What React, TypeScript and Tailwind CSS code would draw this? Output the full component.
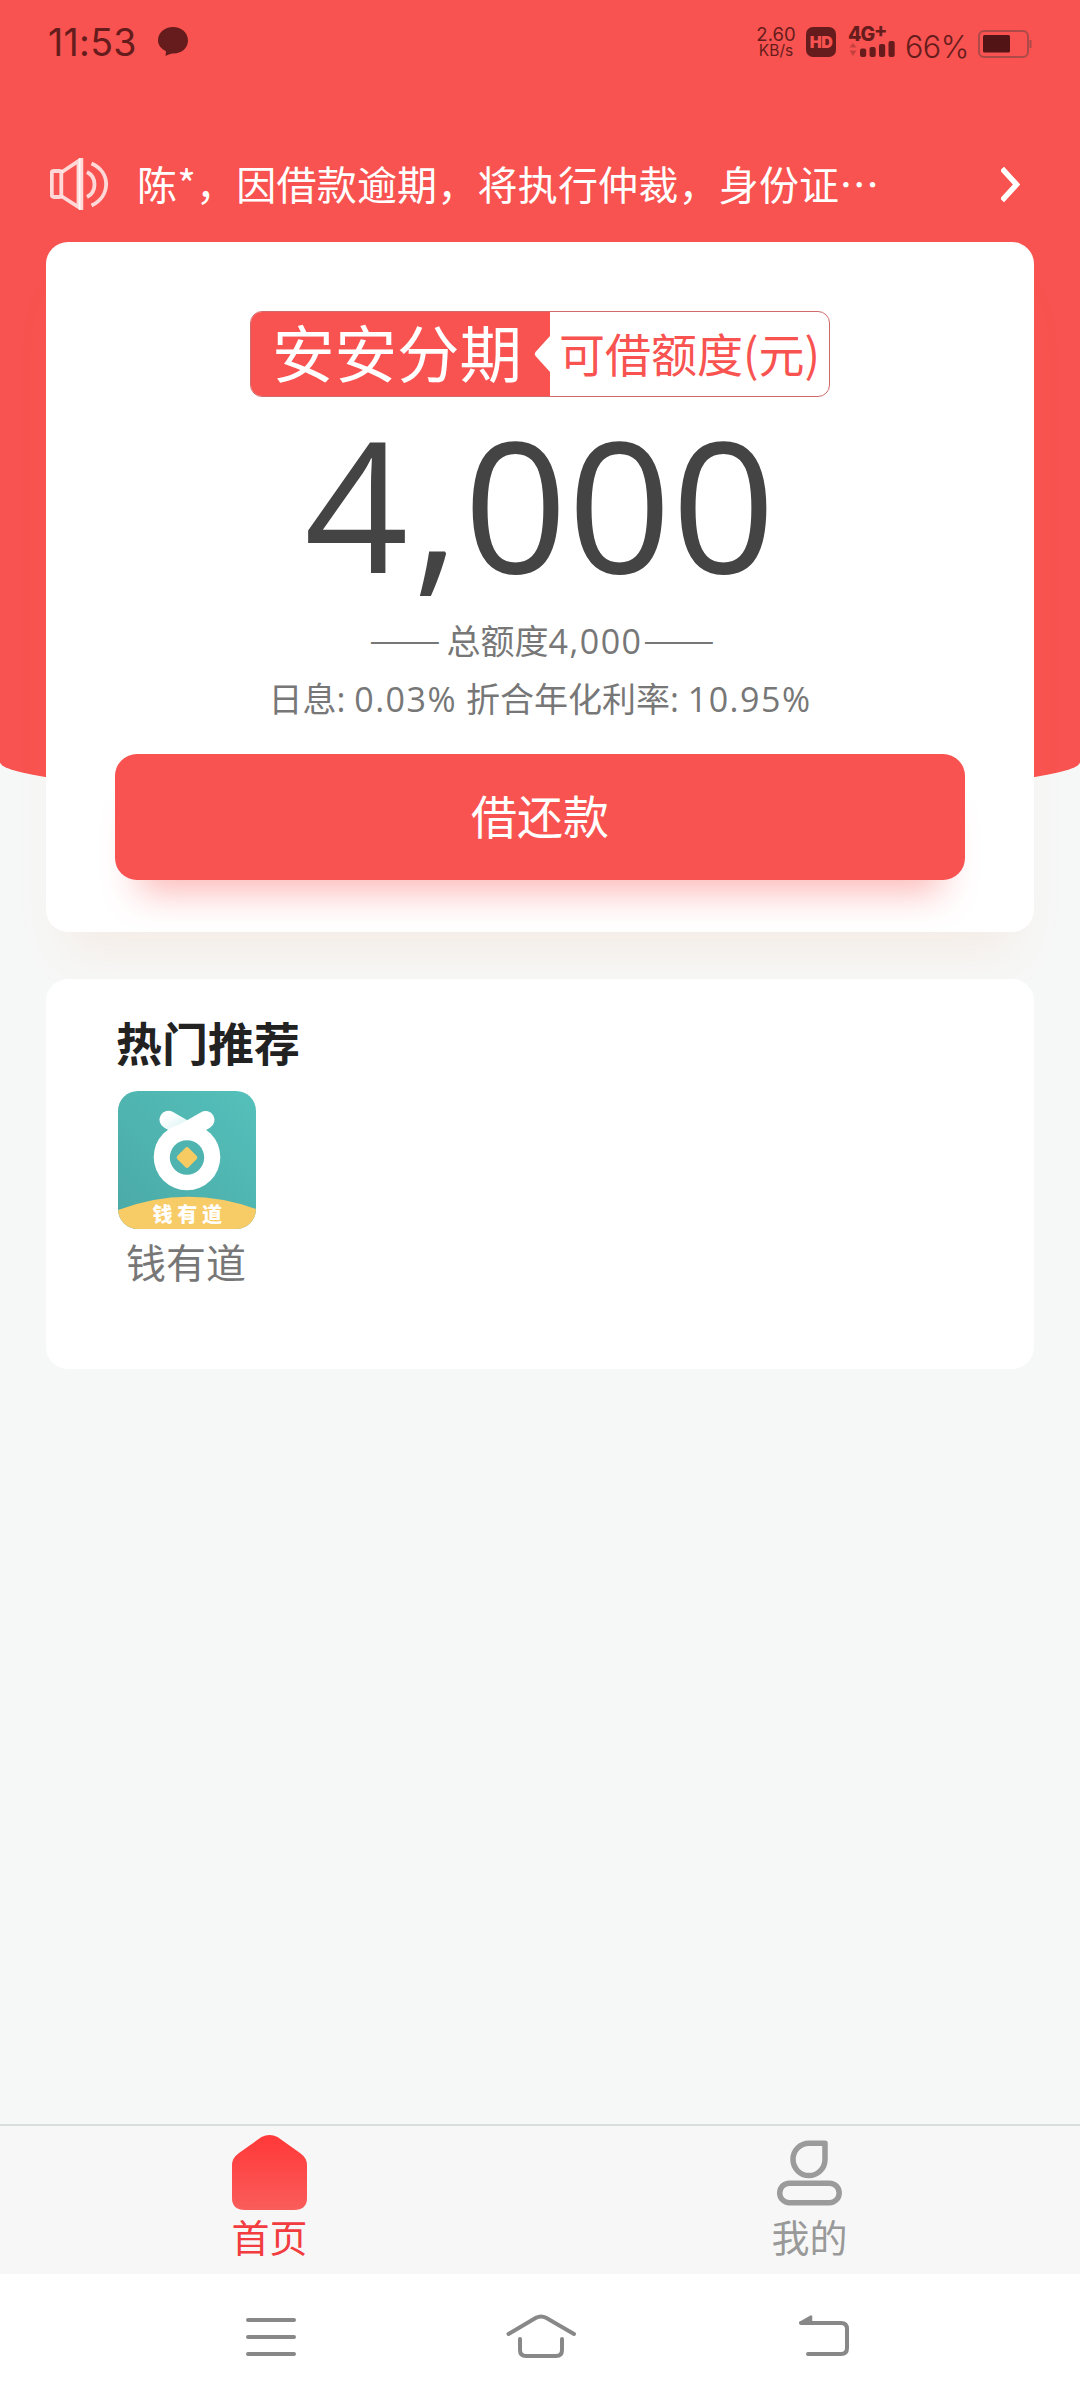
import React from 'react';

const StatusBar: React.FC = () => (
  <div className="flex h-[84px] items-start pl-[48px] pt-[27px] font-[Inter,sans-serif] text-[#661c1c]">
    <span className="mt-[2px] w-[110px] whitespace-nowrap text-[37.500px] leading-[28px] tracking-[0.300px]">11:53</span>
    <svg width="30" height="30" viewBox="0 0 30 30" fill="currentColor">
      <path d="M15 0C23.400 0 30 5.600 30 13.500S23.400 26.500 15.500 26.500C13.500 26.500 12 27 7.500 29L8 24.200C3.200 22 0 18 0 13.500 0 5.600 6.700 0 15 0Z" />
    </svg>
    <div className="ml-[568px] flex w-[40px] flex-col items-center">
      <span className="text-[18.500px] leading-[15px]">2.60</span>
      <span className="mt-[2px] text-[15.500px] leading-[14px]">KB/s</span>
    </div>
    <div className="ml-[10px] flex h-[30px] w-[30px] items-center justify-center rounded-[7px] bg-[#661c1c] text-[16px] font-black leading-none tracking-[-0.5px] text-[#f85350]">
      HD
    </div>
    <div className="ml-[12px] flex w-[48px] flex-col">
      <div className="flex text-[19.500px] font-extrabold leading-[14px] tracking-[-1px]">
        <span>4G</span>
        <span className="mt-[-4px]">+</span>
      </div>
      <svg width="47" height="17" viewBox="0 0 47 17" className="mt-[-1px]" fill="currentColor">
        <path d="M5 3 8.500 7.500H1.500ZM5 16 8.500 10.500H1.500Z" opacity=".35" />
        <rect x="12" y="8.500" width="6.200" height="8.500" rx="2" />
        <rect x="21.500" y="7" width="6.200" height="10" rx="2" />
        <rect x="31" y="4" width="6.200" height="13" rx="2" />
        <rect x="40.500" y="1" width="6.200" height="16" rx="2" />
      </svg>
    </div>
    <span className="ml-[9px] mt-[8px] w-[65px] whitespace-nowrap text-[30.500px] font-light leading-[24px] tracking-[-0.500px]">66%</span>
    <svg width="56" height="30" viewBox="0 0 56 30" className="ml-[8px] mt-[3px]" fill="none">
      <rect x="1" y="1" width="49" height="26" rx="5" stroke="#ad4a49" strokeWidth="2" />
      <rect x="5" y="5" width="27" height="17.500" rx="1.500" fill="#521415" />
      <rect x="51.500" y="10" width="2" height="8" fill="#ad4a49" />
    </svg>
  </div>
);

const Notice: React.FC = () => (
  <div className="flex h-[158px] items-center pl-[50px] pr-[59px] pt-[42px]">
    <svg width="58" height="52" viewBox="0 0 58 52" fill="none" stroke="#fff" strokeOpacity=".78" strokeWidth="3.800">
      <rect x="1.800" y="13" width="9.500" height="26" rx="2" />
      <path d="M12 14 28.500 3V49L12 38.500" />
      <path d="M31 0V52" strokeWidth="4.500" />
      <path d="M37 14C47 19 47 34 37 39" />
      <path d="M41.500 5.500C61 14 61 38 41.500 47.500" />
    </svg>
    <p className="ml-[29px] mt-[-2px] flex-1 whitespace-nowrap text-[40px] leading-[56px] tracking-[0.200px] text-white">
      陈*，因借款逾期，将执行仲裁，身份证…
    </p>
    <svg width="20" height="40" viewBox="0 0 20 40" fill="none" stroke="#fff" strokeWidth="5.500">
      <path d="M1 4.500 15.500 20.500 1 36.500" />
    </svg>
  </div>
);

const LoanCard: React.FC = () => (
  <section className="mx-[46px] flex h-[690px] flex-col items-center rounded-[22px] bg-white pt-[69px] shadow-[0_40px_50px_-20px_rgba(248,130,80,0.1)]">
    <div className="flex h-[86px] w-[580px] rounded-[12px] border border-[#d0696a]">
      <div className="flex w-[299px] items-center justify-between rounded-l-[11px] bg-[#f85350] pl-[21px]">
        <span className="mt-[-6px] whitespace-nowrap text-[62.500px] leading-[92px] text-white">安安分期</span>
        <svg width="16" height="36" viewBox="0 0 16 36" fill="#fff">
          <path d="M16 0 1.500 16Q0 18 1.500 20L16 36Z" />
        </svg>
      </div>
      <div className="mt-[-4px] flex flex-1 items-center justify-center whitespace-nowrap text-[46px] leading-[84px] text-[#f85350]">
        可借额度(元)
      </div>
    </div>
    <div className="mt-[25px] whitespace-nowrap font-['Open_Sans',sans-serif] text-[182px] leading-[160px] text-[#444]">
      4<span className="mx-[4px]">,</span>000
    </div>
    <div className="mt-[34px] flex h-[50px] items-center whitespace-nowrap text-[34px] text-[#777]">
      <span className="mr-[14px] mt-[-5px] w-[54px] origin-left scale-x-[1.260]">——</span>
      <span className="ml-[9px] mt-px font-['Open_Sans','Noto_Sans_CJK_SC',sans-serif]">
        总额度<span className="tracking-[1.500px]">4,000</span>
      </span>
      <span className="mr-[14px] mt-[-5px] w-[54px] origin-left scale-x-[1.260]">——</span>
    </div>
    <div className="mt-[8px] h-[50px] whitespace-nowrap font-['Open_Sans','Noto_Sans_CJK_SC',sans-serif] text-[34px] leading-[50px] text-[#777]">
      日息: <span className="tracking-[1.500px]">0.03%</span> 折合年化利率: <span className="tracking-[1.500px]">10.95%</span>
    </div>
    <button className="mt-[30px] h-[126px] w-[850px] rounded-[22px] bg-[#f85350] pb-[6px] text-[46px] text-white shadow-[0_36px_36px_-24px_rgba(249,84,80,0.42)]">
      借还款
    </button>
  </section>
);

const AppLogo: React.FC = () => (
  <svg width="138" height="138" viewBox="0 0 138 138">
    <defs>
      <linearGradient id="teal" x1="0" y1="1" x2="1" y2="0">
        <stop offset="0" stopColor="#4aa9a6" />
        <stop offset="1" stopColor="#55c0bb" />
      </linearGradient>
      <linearGradient id="ear" x1="0" y1="0" x2="1" y2="1">
        <stop offset="0.200" stopColor="#fff" />
        <stop offset="1" stopColor="#c4eeec" />
      </linearGradient>
      <clipPath id="tile">
        <rect width="138" height="138" rx="20" />
      </clipPath>
    </defs>
    <g clipPath="url(#tile)">
      <rect width="138" height="138" fill="url(#teal)" />
      <path d="M55 20.900 76 33 62 46 46 36.500A9 9 0 0 1 55 20.900Z" fill="url(#ear)" />
      <path d="M87.500 29 56 47" stroke="#fff" strokeWidth="18" strokeLinecap="round" />
      <circle cx="69" cy="66" r="33.300" fill="#fff" />
      <circle cx="69" cy="66.500" r="17.200" fill="#4fb4b0" />
      <rect x="61" y="58.500" width="16" height="16" rx="2.500" fill="#f7cb62" transform="rotate(45 69 66.500)" />
      <path d="M0 119Q69 93 138 118V138H0Z" fill="#f7cb66" />
      <text x="34.500" y="130.500" fontSize="20" fontWeight="900" letterSpacing="4.800" fill="#fff">钱有道</text>
    </g>
  </svg>
);

const HotList: React.FC = () => (
  <section className="mx-[46px] mt-[180px] h-[390px] rounded-[22px] bg-white pl-[70px] pt-[29px]">
    <h2 className="text-[46px] font-bold leading-[66px] text-[#222]">热门推荐</h2>
    <div className="ml-[2px] mt-[17px] flex w-[138px] flex-col items-center">
      <AppLogo />
      <span className="ml-[-2px] mt-[4px] text-[40px] leading-[56px] text-[#777]">钱有道</span>
    </div>
  </section>
);

const TabBar: React.FC = () => (
  <nav className="grid h-[150px] grid-cols-2 border-t-2 border-[#d9dddb] bg-[#f7f7f7] text-[38px] leading-[50px]">
    <div className="flex flex-col items-center pr-px pt-[9px] text-[#f23c40]">
      <svg width="75" height="75" viewBox="0 0 75 75">
        <defs>
          <linearGradient id="home" x1="0" y1="0" x2="0" y2="1">
            <stop offset="0.100" stopColor="#ff3b3b" />
            <stop offset="1" stopColor="#f95d5b" />
          </linearGradient>
        </defs>
        <path
          d="M29.500 2Q37.500-2 45.500 2L68 18Q75 23 75 30V63Q75 75 62 75H13Q0 75 0 63V30Q0 23 7 18Z"
          fill="url(#home)"
        />
      </svg>
      <span className="mt-px">首页</span>
    </div>
    <div className="flex flex-col items-center pr-px pt-[9px] text-[#999]">
      <svg width="75" height="75" viewBox="0 0 75 75" fill="none" stroke="#9b9b9b" strokeWidth="5.500">
        <path d="M37 8.200H53V24.500A16 16.200 0 1 1 37 8.200Z" strokeLinejoin="round" />
        <rect x="7.700" y="48.200" width="59.500" height="19.500" rx="9.750" />
      </svg>
      <span className="mt-px">我的</span>
    </div>
  </nav>
);

const SystemNav: React.FC = () => (
  <div className="flex h-[126px] items-start bg-white pl-[246px] pt-[38px]">
    <svg width="50" height="50" viewBox="0 0 50 50" stroke="#888" strokeWidth="4" strokeLinecap="round">
      <path d="M2 8H48M2 25H48M2 42H48" />
    </svg>
    <svg
      width="72"
      height="50"
      viewBox="0 0 72 50"
      className="ml-[209px]"
      fill="none"
      stroke="#888"
      strokeWidth="4"
      strokeLinecap="round"
    >
      <path d="M3.500 22 31 5.800Q36 3 41 5.800L69 22M15 27V38Q15 44 21 44H51Q57 44 57 38V27" />
    </svg>
    <svg width="54" height="50" viewBox="0 0 54 50" className="ml-[220px]" fill="none" stroke="#888" strokeWidth="4" strokeLinecap="round">
      <path d="M4 11H44Q50 11 50 17V36Q50 42 44 42H11" />
      <path d="M3.500 10.500 14 4.500V10.500Z" fill="#888" strokeWidth="2.500" strokeLinejoin="round" />
    </svg>
  </div>
);

export default function App() {
  return (
    <div
      lang="zh-CN"
      className="flex h-[2400px] w-[1080px] flex-col overflow-hidden bg-[#f6f8f7] font-['Noto_Sans_CJK_SC',sans-serif]"
    >
      <header className="h-[799px] shrink-0 bg-[#f85350] [border-radius:0_0_540px_540px/0_0_37px_37px]">
        <StatusBar />
        <Notice />
        <LoanCard />
      </header>
      <main className="flex-1">
        <HotList />
      </main>
      <TabBar />
      <SystemNav />
    </div>
  );
}
